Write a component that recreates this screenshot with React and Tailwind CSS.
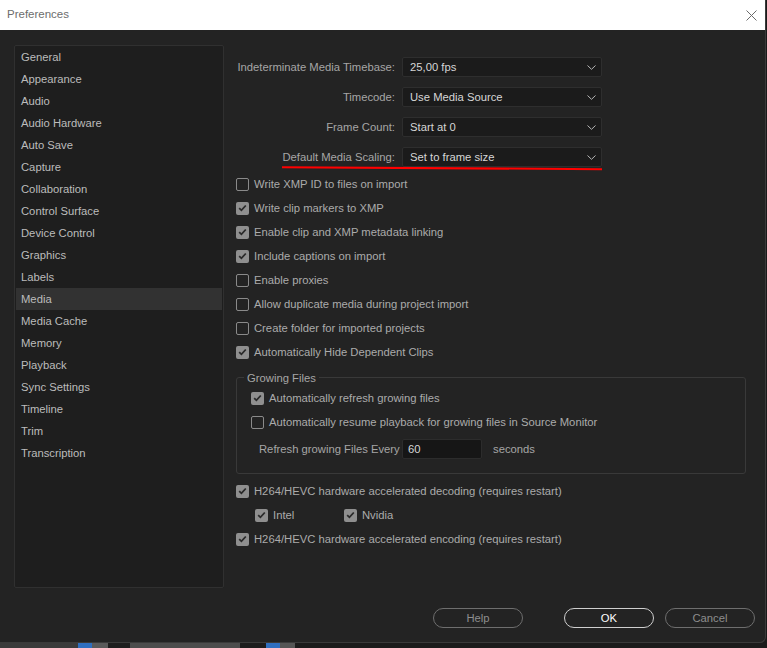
import { useState } from 'react'

const SECTIONS = [
  'General', 'Appearance', 'Audio', 'Audio Hardware', 'Auto Save', 'Capture',
  'Collaboration', 'Control Surface', 'Device Control', 'Graphics', 'Labels',
  'Media', 'Media Cache', 'Memory', 'Playback', 'Sync Settings', 'Timeline',
  'Trim', 'Transcription',
]

const SELECTS = [
  { label: 'Indeterminate Media Timebase:', value: '25,00 fps' },
  { label: 'Timecode:', value: 'Use Media Source' },
  { label: 'Frame Count:', value: 'Start at 0' },
  { label: 'Default Media Scaling:', value: 'Set to frame size', marked: true },
]

const OPTIONS = [
  { id: 'xmpId', label: 'Write XMP ID to files on import', on: false },
  { id: 'markers', label: 'Write clip markers to XMP', on: true },
  { id: 'linking', label: 'Enable clip and XMP metadata linking', on: true },
  { id: 'captions', label: 'Include captions on import', on: true },
  { id: 'proxies', label: 'Enable proxies', on: false },
  { id: 'dupes', label: 'Allow duplicate media during project import', on: false },
  { id: 'folder', label: 'Create folder for imported projects', on: false },
  { id: 'hide', label: 'Automatically Hide Dependent Clips', on: true },
]

function Check({ on, onClick, label }) {
  return (
    <button onClick={onClick} className="flex items-center gap-[5px] text-left whitespace-nowrap">
      <span
        className={`w-[13px] h-[13px] rounded-[2px] flex items-center justify-center shrink-0 ${
          on ? 'bg-[#8f8f8f]' : 'border-[1.5px] border-[#8a8a8a]'
        }`}
      >
        {on && (
          <svg width="9" height="8" viewBox="0 0 9 8">
            <path d="M1.2 4.2 L3.4 6.3 L7.8 1.5" fill="none" stroke="#2a2a2a" strokeWidth="1.8" />
          </svg>
        )}
      </span>
      <span className="text-[#ababab]">{label}</span>
    </button>
  )
}

function Chevron() {
  return (
    <svg width="9" height="5" viewBox="0 0 9 5">
      <path d="M0.5 0.5 L4.5 4.3 L8.5 0.5" fill="none" stroke="#b5b5b5" strokeWidth="1" />
    </svg>
  )
}

export default function App() {
  const [active, setActive] = useState('Media')
  const [opts, setOpts] = useState(() => Object.fromEntries(OPTIONS.map(o => [o.id, o.on])))
  const [grow, setGrow] = useState({ refresh: true, resume: false })
  const [hw, setHw] = useState({ decode: true, intel: true, nvidia: true, encode: true })

  function toggle(id) {
    setOpts(prev => ({ ...prev, [id]: !prev[id] }))
  }

  return (
    <div
      className="w-[767px] h-[648px] flex flex-col bg-[#1a1a1a] overflow-hidden text-[11.25px]"
      style={{ fontFamily: '"Liberation Sans", Arial, sans-serif' }}
    >
      <div className="h-[643px] flex flex-col bg-[#232323] border-r border-b border-[#3a3a3a] rounded-br-[6px] w-[766px] overflow-hidden">
        {/* Title bar */}
        <div className="h-[30px] bg-white flex items-center justify-between pl-[7px] pr-[8px] shrink-0">
          <span className="text-[#6d6d6d] text-[11.5px]">Preferences</span>
          <svg width="11" height="11" viewBox="0 0 11 11">
            <path d="M0.5 0.5 L10.5 10.5 M10.5 0.5 L0.5 10.5" stroke="#6a6a6a" strokeWidth="1" />
          </svg>
        </div>

        <div className="flex-1 flex flex-col">
          <div className="flex pl-[14px] pt-[15px]">
            {/* Sidebar */}
            <div className="w-[210px] h-[543px] bg-[#1e1e1e] border border-[#303030] rounded-[2px] p-px pt-0 shrink-0">
              {SECTIONS.map(s => (
                <button
                  key={s}
                  onClick={() => setActive(s)}
                  className={`w-full h-[22px] flex items-center px-[5px] text-left text-[#bcbcbc] ${
                    active === s ? 'bg-[#323232]' : ''
                  }`}
                >
                  {s}
                </button>
              ))}
            </div>

            {/* Content */}
            <div className="flex-1 pl-[12px] pt-[12px] pr-[20px]">
              <div className="flex flex-col gap-[10px]">
                {SELECTS.map(s => (
                  <div key={s.label} className="relative flex items-center">
                    <span className="w-[166px] shrink-0 whitespace-nowrap text-right text-[#a6a6a6] pr-[7px]">{s.label}</span>
                    <div className="w-[200px] h-[20px] bg-[#1b1b1b] border border-[#2e2e2e] rounded-[2px] flex items-center justify-between pl-[7px] pr-[5px]">
                      <span className="text-[#d6d6d6]">{s.value}</span>
                      <Chevron />
                    </div>
                    {s.marked && (
                      <svg className="absolute left-[46px] top-[19px]" width="320" height="5" viewBox="0 0 320 5">
                        <path d="M0 1.2 Q160 1.6 320 3.2" fill="none" stroke="#ff0000" strokeWidth="2" />
                      </svg>
                    )}
                  </div>
                ))}
              </div>

              <div className="flex flex-col mt-[5px]">
                {OPTIONS.map(o => (
                  <div key={o.id} className="h-[24px] flex items-center">
                    <Check on={opts[o.id]} onClick={() => toggle(o.id)} label={o.label} />
                  </div>
                ))}
              </div>

              {/* Growing Files */}
              <div className="relative mt-[13px] w-[510px] h-[97px] border border-[#393939] rounded-[3px] pl-[14px] pt-[8px]">
                <span className="absolute -top-[8px] left-[7px] bg-[#232323] px-[3px] text-[#a6a6a6]">Growing Files</span>
                <div className="h-[24px] flex items-center">
                  <Check on={grow.refresh} onClick={() => setGrow(g => ({ ...g, refresh: !g.refresh }))} label="Automatically refresh growing files" />
                </div>
                <div className="h-[24px] flex items-center">
                  <Check on={grow.resume} onClick={() => setGrow(g => ({ ...g, resume: !g.resume }))} label="Automatically resume playback for growing files in Source Monitor" />
                </div>
                <div className="h-[20px] mt-[5px] flex items-center pl-[8px]">
                  <span className="text-[#a6a6a6] w-[143px] whitespace-nowrap">Refresh growing Files Every</span>
                  <div className="w-[80px] h-[20px] bg-[#161616] border border-[#2c2c2c] rounded-[2px] flex items-center pl-[5px] text-[#d6d6d6]">60</div>
                  <span className="ml-[11px] text-[#a6a6a6]">seconds</span>
                </div>
              </div>

              <div className="flex flex-col mt-[5px]">
                <div className="h-[24px] flex items-center">
                  <Check on={hw.decode} onClick={() => setHw(h => ({ ...h, decode: !h.decode }))} label="H264/HEVC hardware accelerated decoding (requires restart)" />
                </div>
                <div className="h-[24px] flex items-center pl-[19px]">
                  <div className="w-[89px]">
                    <Check on={hw.intel} onClick={() => setHw(h => ({ ...h, intel: !h.intel }))} label="Intel" />
                  </div>
                  <Check on={hw.nvidia} onClick={() => setHw(h => ({ ...h, nvidia: !h.nvidia }))} label="Nvidia" />
                </div>
                <div className="h-[24px] flex items-center">
                  <Check on={hw.encode} onClick={() => setHw(h => ({ ...h, encode: !h.encode }))} label="H264/HEVC hardware accelerated encoding (requires restart)" />
                </div>
              </div>
            </div>
          </div>

          {/* Buttons */}
          <div className="flex justify-end gap-[11px] pr-[10px] mt-[20px]">
            <button className="w-[90px] h-[20px] rounded-full border border-[#6e6e6e] text-[#8e8e8e] mr-[30px]">Help</button>
            <button className="w-[90px] h-[20px] rounded-full border border-[#cfcfcf] text-white">OK</button>
            <button className="w-[90px] h-[20px] rounded-full border border-[#6e6e6e] text-[#8e8e8e]">Cancel</button>
          </div>
        </div>
      </div>

      {/* Editor behind the dialog */}
      <div className="flex-1 flex">
        <div className="w-[78px] bg-[#3b3b3b]" />
        <div className="w-[14px] bg-[#2f6fc0]" />
        <div className="w-[16px] bg-[#5a5a5a]" />
        <div className="w-[22px] bg-[#1e1e1e]" />
        <div className="w-[110px] bg-[#4d4d4d]" />
        <div className="w-[26px] bg-[#1c1c1c]" />
        <div className="w-[14px] bg-[#2f6fc0]" />
        <div className="w-[15px] bg-[#555]" />
        <div className="flex-1 bg-[#1b1b1b]" />
      </div>
    </div>
  )
}
